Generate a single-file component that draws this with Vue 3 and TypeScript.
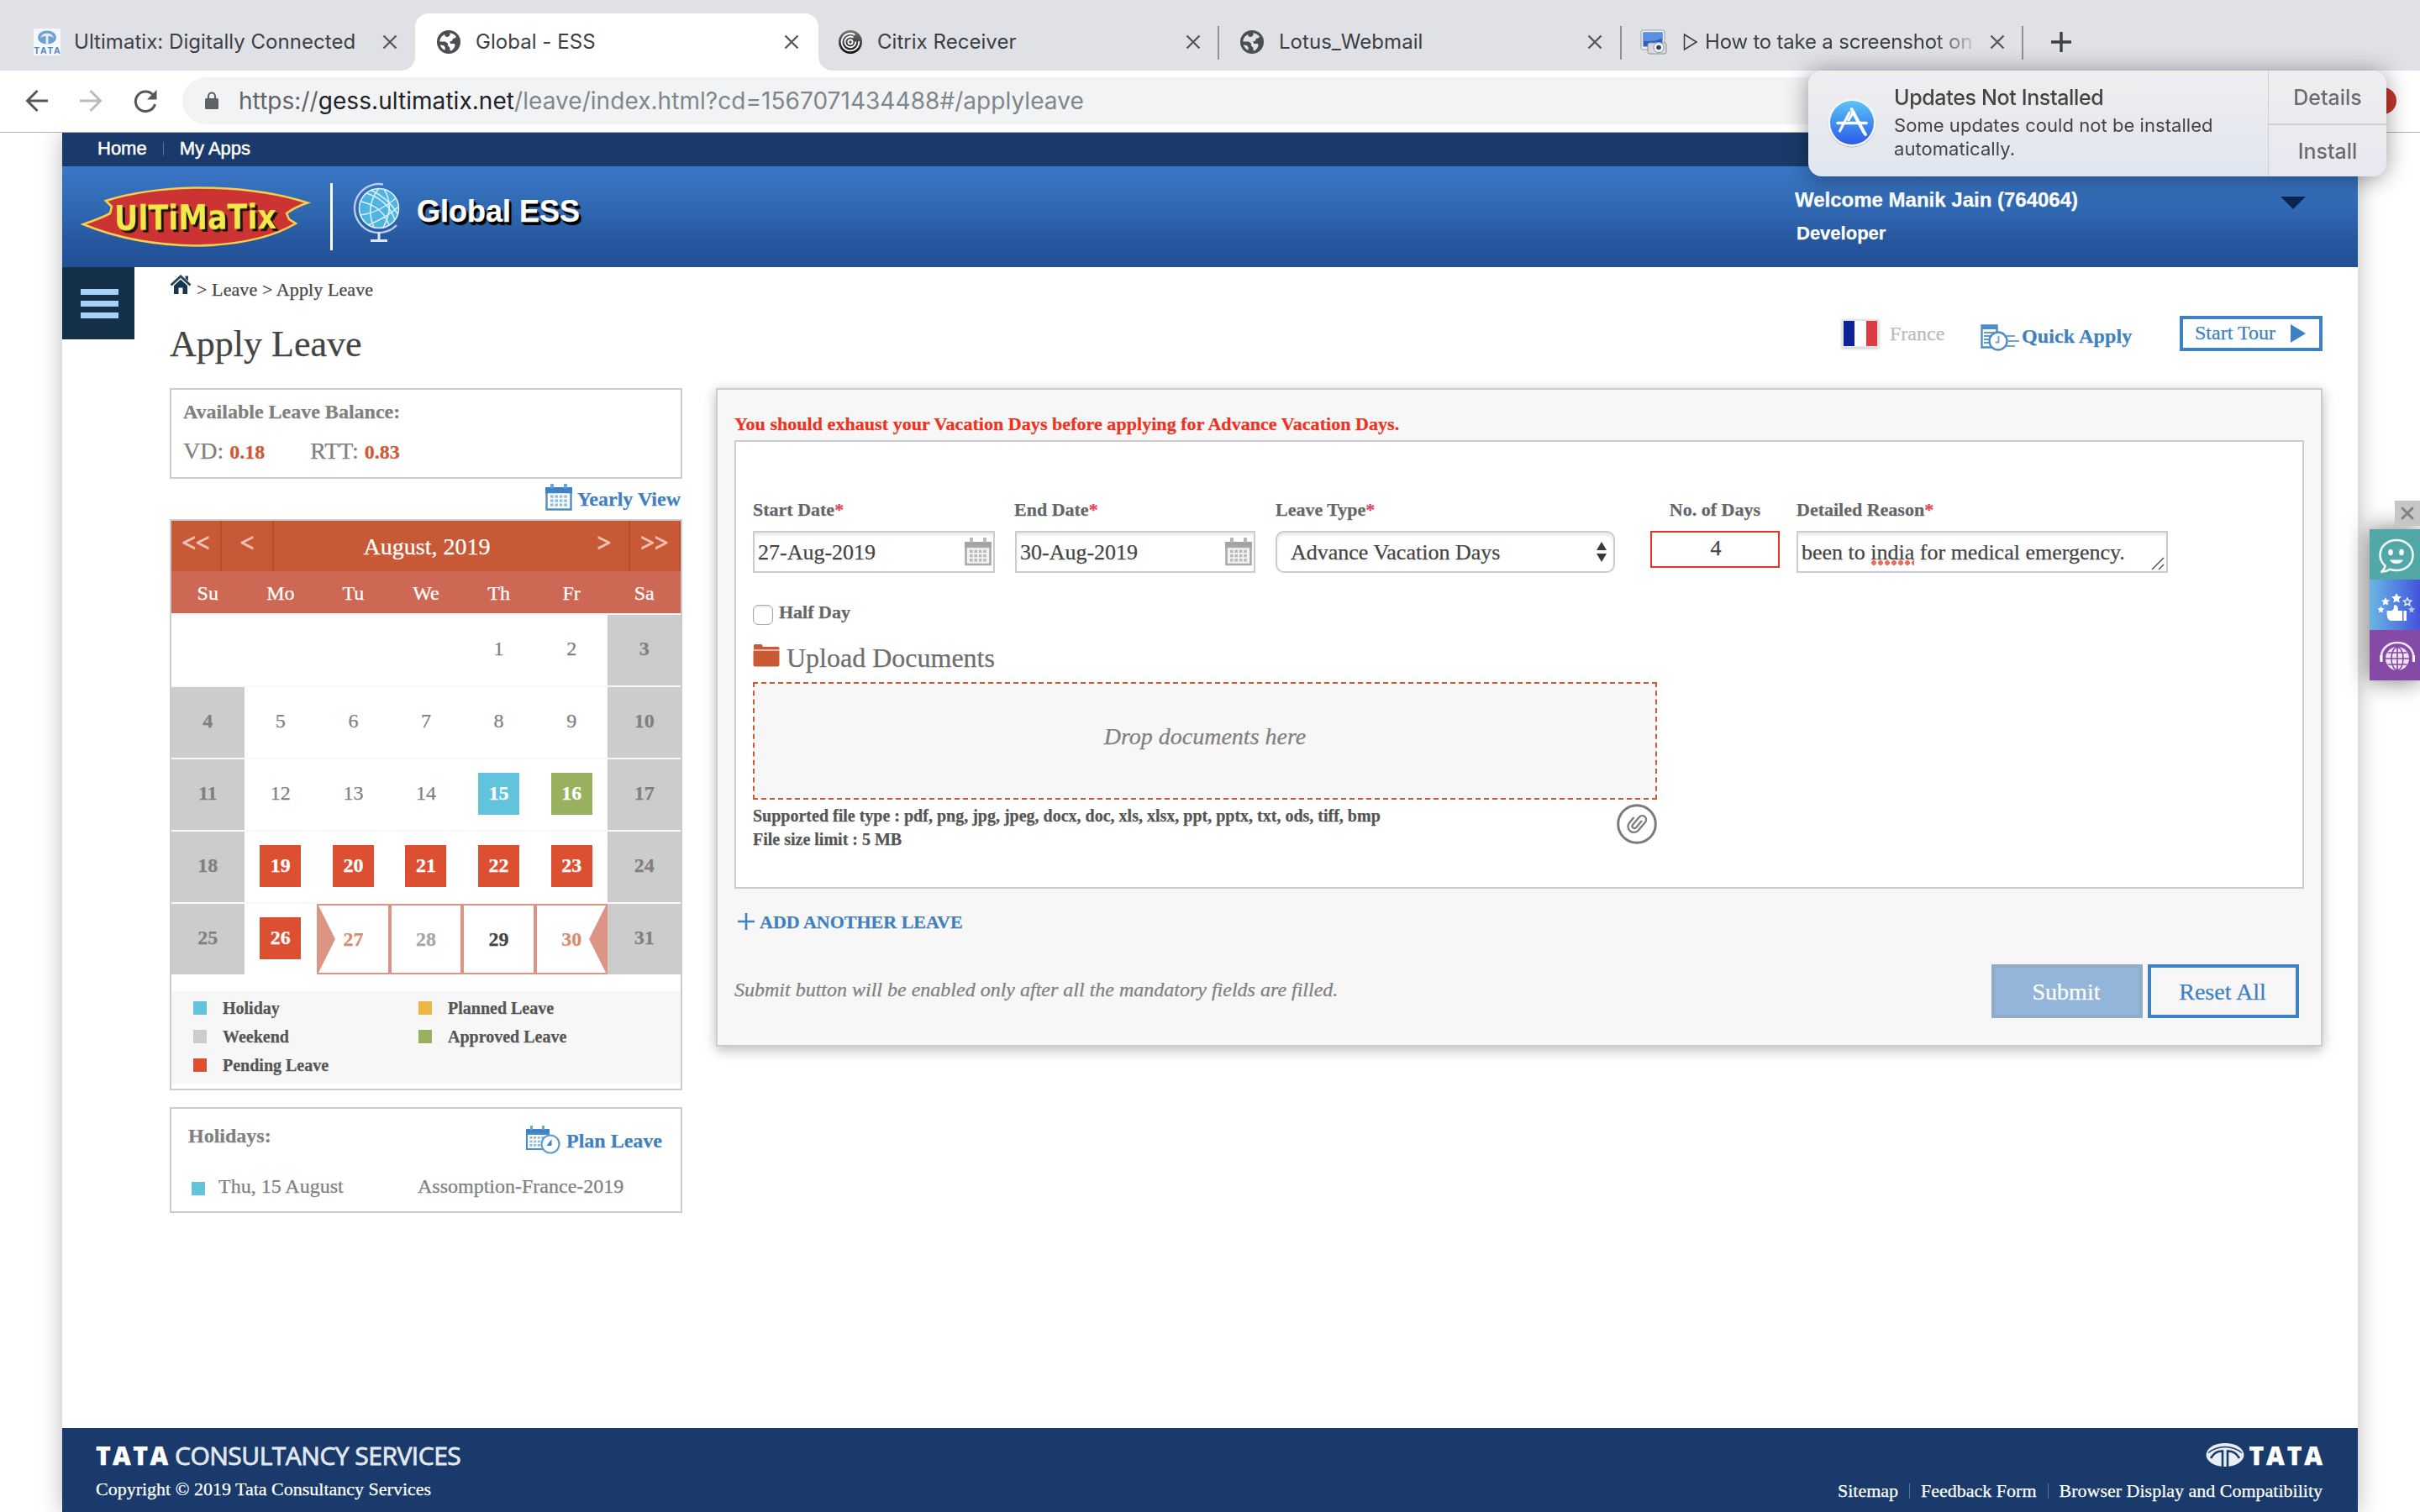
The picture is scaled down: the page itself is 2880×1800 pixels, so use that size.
<script setup lang="ts">
interface Day {
  n: number | null
  kind?: 'weekend' | 'holiday' | 'approved' | 'pending' | 'start' | 'mid' | 'today' | 'end'
}
interface Tab {
  title: string
  icon: 'tata' | 'globe' | 'citrix' | 'shot'
  cls: string
}

const tabs: Tab[] = [
  { title: 'Ultimatix: Digitally Connected', icon: 'tata', cls: 't1' },
  { title: 'Global - ESS', icon: 'globe', cls: 't2 active' },
  { title: 'Citrix Receiver', icon: 'citrix', cls: 't3 sep' },
  { title: 'Lotus_Webmail', icon: 'globe', cls: 't4 sep' },
  { title: 'How to take a screenshot on', icon: 'shot', cls: 't5 sep' },
]

const weekdays: string[] = ['Su', 'Mo', 'Tu', 'We', 'Th', 'Fr', 'Sa']

const special: Record<number, Day['kind']> = {
  15: 'holiday', 16: 'approved',
  19: 'pending', 20: 'pending', 21: 'pending', 22: 'pending', 23: 'pending', 26: 'pending',
  27: 'start', 28: 'mid', 29: 'today', 30: 'end',
}

const days: Day[] = Array.from({ length: 35 }, (_, i): Day => {
  const n = i - 3
  if (n < 1) return { n: null }
  const weekend = i % 7 === 0 || i % 7 === 6
  return { n, kind: weekend ? 'weekend' : special[n] }
})

const legend = [
  { label: 'Holiday', cls: 'c-holiday' },
  { label: 'Planned Leave', cls: 'c-planned' },
  { label: 'Weekend', cls: 'c-weekend' },
  { label: 'Approved Leave', cls: 'c-approved' },
  { label: 'Pending Leave', cls: 'c-pending' },
]

const gridDots: number[] = [0, 1, 2, 3]
</script>

<template>
  <div class="screen">
    <!-- Browser tabs -->
    <div class="tabstrip">
      <div v-for="t in tabs" :key="t.title" class="tab" :class="t.cls">
        <svg v-if="t.icon === 'tata'" class="fav32" viewBox="0 0 32 32">
          <rect width="32" height="32" fill="#f4f7fb" />
          <ellipse cx="16" cy="10.500" rx="11" ry="8" fill="#6f9ed0" />
          <path d="M14.500 19V9q-4-.5-6.500 2.500Q9.500 5.500 16 5.500T24 11.500Q21.500 8.500 17.500 9v10z" fill="#e3edf7" />
          <text x="0.500" y="30" font-size="10.500" font-weight="bold" textLength="31" fill="#4f86c0" font-family="Liberation Sans, sans-serif">TATA</text>
        </svg>
        <svg v-else-if="t.icon === 'globe'" class="fav28" viewBox="0 0 28 28">
          <circle cx="14" cy="14" r="14" fill="#4b4e52" />
          <path d="M15.500 3.200c3 .3 5.800 2 7.500 4.400l-1.500 1.900-2.500.3-.8 2.600-3 1.200 1 2.500h4.500l1 2-1.500 3.500-3 2.800-1.500-.4-.5-3.500-2.200-2v-2.700l-3-2.300H3.300C3.500 9.500 6 6.500 9 5l1 2.500 3 .5 2.500-2z" :fill="t.cls.includes('active') ? '#fff' : '#dfe1e6'" />
          <path d="M3.800 17.500l4 .6 2 2.400-.4 3.300C6.700 22.500 4.700 20.400 3.800 17.500z" :fill="t.cls.includes('active') ? '#fff' : '#dfe1e6'" />
        </svg>
        <svg v-else-if="t.icon === 'citrix'" class="fav28" viewBox="0 0 28 28">
          <defs>
            <linearGradient id="ctx" x1="0" y1="0" x2="0" y2="1">
              <stop offset="0" stop-color="#777" /><stop offset="1" stop-color="#111" />
            </linearGradient>
          </defs>
          <circle cx="14" cy="14" r="14" fill="url(#ctx)" />
          <g fill="none" stroke="#fff" stroke-width="1.800">
            <circle cx="14" cy="14" r="2.600" />
            <path d="M17.500 8.600A6.400 6.400 0 1 0 20.300 13.500" />
            <path d="M19.500 5.400A10.300 10.300 0 1 0 24.200 13" />
          </g>
        </svg>
        <svg v-else class="fav32" viewBox="0 0 32 32">
          <rect x="1" y="2" width="28" height="23" rx="2" fill="#eef0f3" stroke="#9a9da3" stroke-width="1" />
          <rect x="3.500" y="4.500" width="23" height="17" fill="#2f5fc0" />
          <path d="M3.500 4.500h23v7q-11 5-23 3z" fill="#5b8fe0" />
          <rect x="9" y="17" width="22" height="13" rx="2" fill="#d7d9dc" stroke="#8d9096" stroke-width="1" />
          <circle cx="22" cy="22.500" r="6" fill="#f6f6f6" stroke="#94979c" />
          <circle cx="22" cy="22.500" r="2.800" fill="#24446f" />
        </svg>
        <svg v-if="t.icon === 'shot'" class="playmark" viewBox="0 0 18 22"><path d="M1.500 2v18L16 11z" fill="none" stroke="#3c4043" stroke-width="1.600" /></svg>
        <span class="tabtitle">{{ t.title }}</span>
        <svg class="tabclose" viewBox="0 0 18 18"><path d="M1.500 1.500l15 15M16.500 1.500l-15 15" stroke="#55585d" stroke-width="2.400" /></svg>
      </div>
      <svg class="newtab" viewBox="0 0 26 26"><path d="M13 1v24M1 13h24" stroke="#3c4043" stroke-width="3.400" /></svg>
    </div>

    <!-- Address bar -->
    <div class="toolbar">
      <svg class="nav" viewBox="0 0 28 28"><path d="M27 14H3M14.500 2L2.500 14l12 12" fill="none" stroke="#54575c" stroke-width="3" /></svg>
      <svg class="nav fwd" viewBox="0 0 28 28"><path d="M1 14h24M13.500 2l12 12-12 12" fill="none" stroke="#b9bbbe" stroke-width="3" /></svg>
      <svg class="nav rel" viewBox="0 0 30 28"><path d="M25 8.200A11.800 11.800 0 1 0 26.500 18" fill="none" stroke="#54575c" stroke-width="3" /><path d="M28.500 1v11.500H17z" fill="#54575c" /></svg>
      <div class="omnibox">
        <svg class="lock" viewBox="0 0 18 24"><rect x="1" y="9" width="16" height="13" rx="1.500" fill="#5f6368" /><path d="M5 10V6.500a4 4 0 0 1 8 0V10" fill="none" stroke="#5f6368" stroke-width="2.200" /></svg>
        <div class="url"><span class="u1">https://</span><span class="u2">gess.ultimatix.net</span><span class="u3">/leave/index.html?cd=1567071434488#/applyleave</span></div>
      </div>
    </div>

    <!-- Web page -->
    <div class="viewport">
      <div class="page">
        <div class="topnav"><span>Home</span><i></i><span>My Apps</span></div>

        <header class="banner">
          <svg class="ulogo" viewBox="96 220 274 76">
            <path d="M99 267Q122 259 131 254L133 246L126 239Q170 225 232 223.500Q310 223 366 241.500Q352 246 341 254L344 261L352 266Q310 291 235 292.500Q160 292 99 267Z" fill="#cb3433" stroke="#f2cf4e" stroke-width="2.600" />
            <text class="ulogotext" x="136" y="273" font-size="40" textLength="193" lengthAdjust="spacingAndGlyphs" transform="rotate(-.6 232 260)">UlTiMaTix</text>
          </svg>
          <i class="bar"></i>
          <svg class="globe" viewBox="418 216 60 76">
            <circle cx="451" cy="248" r="24" fill="#4fb4e2" />
            <g fill="none" stroke="#d9effa" stroke-width="1.600">
              <circle cx="451" cy="248" r="23.500" />
              <path d="M436 230Q462 238 470 262M430 240Q456 246 463 268M428 256Q450 254 471 236M438 268Q462 258 474 246M451 224Q434 246 445 271M457 225Q470 246 456 271M441 226Q462 236 473 254" />
            </g>
            <path d="M456 219.500A29 29 0 1 0 472 268" fill="none" stroke="#b9cde8" stroke-width="2.400" />
            <path d="M451 276v10M441 286.500h20" stroke="#dfe8f4" stroke-width="3" />
          </svg>
          <h2>Global ESS</h2>
          <div class="who"><b>Welcome Manik Jain (764064)</b><b class="role">Developer</b></div>
          <i class="caret"></i>
        </header>

        <div class="content">
          <div class="burger"><i></i><i></i><i></i></div>

          <aside class="left">
            <div class="crumbs">
              <svg viewBox="0 0 26 24"><path d="M1.500 12.500L13 2l11.500 10.500" fill="none" stroke="#2b4560" stroke-width="3" /><path d="M18.500 1.500h3.500v6l-3.500-3z" fill="#2b4560" /><path d="M5 13l8-7.200L21 13v10h-5.500v-7.500h-5V23H5z" fill="#16334f" /></svg>
              <span>&gt; Leave &gt; Apply Leave</span>
            </div>
            <h1>Apply Leave</h1>

            <section class="balance">
              <b>Available Leave Balance:</b>
              <p><span>VD: <em>0.18</em></span><span>RTT: <em>0.83</em></span></p>
            </section>

            <div class="yearly">
              <svg viewBox="0 0 32 32">
                <path d="M0 4h32v8H0z" fill="#3d83c4" /><path d="M1.500 10h29v20.500h-29z" fill="#fff" stroke="#4c8cc9" stroke-width="2.400" />
                <path d="M1 10h30" stroke="#3d83c4" stroke-width="2" />
                <path d="M6 0h4v5H6zM22 0h4v5h-4z" fill="#6fa5d6" />
                <g fill="#8fb9e0"><template v-for="r in 3" :key="r"><rect v-for="c in gridDots" :key="c" :x="6 + c * 5.4" :y="8.500 + r * 5" width="3.600" height="3.200" /></template></g>
              </svg>
              <a>Yearly View</a>
            </div>

            <section class="calendar">
              <div class="calhead">
                <span class="nv">&lt;&lt;</span><span class="nv">&lt;</span><span class="month">August, 2019</span><span class="nv">&gt;</span><span class="nv">&gt;&gt;</span>
              </div>
              <div class="week"><span v-for="w in weekdays" :key="w">{{ w }}</span></div>
              <div class="days">
                <div v-for="(d, i) in days" :key="i" class="day" :class="d.kind"><span v-if="d.n">{{ d.n }}</span></div>
              </div>
              <div class="legend">
                <div v-for="l in legend" :key="l.label"><i :class="l.cls"></i>{{ l.label }}</div>
              </div>
            </section>

            <section class="holidays">
              <div class="hrow">
                <b>Holidays:</b>
                <a>
                  <svg viewBox="0 0 42 34">
                    <path d="M1 4h28v7H1z" fill="#3d83c4" /><path d="M6 0h3v5H6zM20 0h3v5h-3z" fill="#6fa5d6" />
                    <path d="M2 10h26v18H2z" fill="#fff" stroke="#4c8cc9" stroke-width="2.200" />
                    <g fill="#8fb9e0"><template v-for="r in 3" :key="r"><rect v-for="c in gridDots" :key="c" :x="5.5 + c * 4.600" :y="8.500 + r * 4.500" width="3" height="2.800" /></template></g>
                    <circle cx="30" cy="22" r="10.500" fill="#fff" stroke="#5e9bd1" stroke-width="2.200" />
                    <path d="M31.500 16v8h-6z" fill="#3d83c4" />
                  </svg>
                  Plan Leave
                </a>
              </div>
              <div class="hitem"><i class="c-holiday"></i><span class="hd">Thu, 15 August</span><span>Assomption-France-2019</span></div>
            </section>
          </aside>

          <main class="main">
            <div class="actions">
              <span class="flag"><i></i><i></i><i></i></span>
              <span class="country">France</span>
              <svg class="qa" viewBox="0 0 46 32">
                <path d="M1.500 1.500h18v26h-18z" fill="#fff" stroke="#4c8cc9" stroke-width="2.400" /><path d="M1 1h19v5H1z" fill="#4c8cc9" />
                <path d="M4 10h12M4 14h9M4 18h8M4 22h7" stroke="#5e9bd1" stroke-width="2" />
                <circle cx="21" cy="20" r="10.500" fill="#fff" stroke="#4c8cc9" stroke-width="2.400" /><path d="M21.500 14v7.500h-4" fill="none" stroke="#6fa5d6" stroke-width="2" />
                <path d="M31 14h10M33 20h13M31 26h10" stroke="#6fa5d6" stroke-width="2" />
              </svg>
              <a class="quick">Quick Apply</a>
              <button class="tour">Start Tour<i></i></button>
            </div>

            <section class="form">
              <p class="error">You should exhaust your Vacation Days before applying for Advance Vacation Days.</p>
              <div class="inner">
                <div class="fields">
                  <div class="f f1"><label>Start Date<sup>*</sup></label><div class="inp"><span>27-Aug-2019</span>
                    <svg class="cal" viewBox="0 0 32 34"><path d="M0 5h32v8H0z" fill="#a3a3a3" /><path d="M1.500 11h29v21h-29z" fill="#f3f3f3" stroke="#aaa" stroke-width="2.600" /><path d="M6 0h4v6H6zM22 0h4v6h-4z" fill="#b8b8b8" /><g fill="#b9b9b9"><template v-for="r in 3" :key="r"><rect v-for="c in gridDots" :key="c" :x="6 + c * 5.4" :y="9.500 + r * 5.200" width="3.600" height="3.400" /></template></g></svg>
                  </div></div>
                  <div class="f f2"><label>End Date<sup>*</sup></label><div class="inp"><span>30-Aug-2019</span>
                    <svg class="cal" viewBox="0 0 32 34"><path d="M0 5h32v8H0z" fill="#a3a3a3" /><path d="M1.500 11h29v21h-29z" fill="#f3f3f3" stroke="#aaa" stroke-width="2.600" /><path d="M6 0h4v6H6zM22 0h4v6h-4z" fill="#b8b8b8" /><g fill="#b9b9b9"><template v-for="r in 3" :key="r"><rect v-for="c in gridDots" :key="c" :x="6 + c * 5.4" :y="9.500 + r * 5.200" width="3.600" height="3.400" /></template></g></svg>
                  </div></div>
                  <div class="f f3"><label>Leave Type<sup>*</sup></label><div class="inp sel"><span>Advance Vacation Days</span>
                    <svg class="updown" viewBox="0 0 14 24"><path d="M1 10L7 0l6 10zM1 14l6 10 6-10z" fill="#3a3a3a" /></svg>
                  </div></div>
                  <div class="f f4"><label>No. of Days</label><div class="inp num">4</div></div>
                  <div class="f f5"><label>Detailed Reason<sup>*</sup></label><div class="inp area"><span>been to <u>india</u> for medical emergency.</span>
                    <svg class="grip" viewBox="0 0 16 16"><path d="M1 15L15 1M9 15l6-6" stroke="#555" stroke-width="1.500" /></svg>
                  </div></div>
                </div>

                <div class="half"><i></i><b>Half Day</b></div>
                <div class="upl">
                  <svg viewBox="0 0 32 28"><path d="M1 5V2.500Q1 1 2.500 1h8L12 4h18q1.500 0 1.500 1.500V7H1z" fill="#c75b39" /><path d="M.5 9h31v16.500q0 2-2 2h-27q-2 0-2-2z" fill="#c95a36" /><path d="M.5 7h31v2H.5z" fill="#e9b6a5" /></svg>
                  <span>Upload Documents</span>
                </div>
                <div class="drop">Drop documents here</div>
                <div class="hint">
                  <p>Supported file type : pdf, png, jpg, jpeg, docx, doc, xls, xlsx, ppt, pptx, txt, ods, tiff, bmp<br>File size limit : 5 MB</p>
                  <svg class="clip" viewBox="0 0 48 48"><circle cx="24" cy="24" r="22.300" fill="#fff" stroke="#7b7b7b" stroke-width="3" /><path d="M29.500 21l-7 8.200a2.600 2.600 0 0 1-4-3.300l8-9.400a4.700 4.700 0 0 1 7.200 6l-8.600 10.200a7 7 0 0 1-10.700-9l5.600-6.600" fill="none" stroke="#7b7b7b" stroke-width="2.300" transform="translate(.5 -1)" /></svg>
                </div>
              </div>
              <div class="add"><svg viewBox="0 0 20 20"><path d="M10 0v20M0 10h20" stroke="#3f82c3" stroke-width="2.600" /></svg><a>ADD ANOTHER LEAVE</a></div>
              <div class="submitrow">
                <em>Submit button will be enabled only after all the mandatory fields are filled.</em>
                <button class="btn submit">Submit</button>
                <button class="btn reset">Reset All</button>
              </div>
            </section>
          </main>
        </div>

        <footer class="foot">
          <div>
            <div class="tcs"><b>TATA</b><span>CONSULTANCY SERVICES</span></div>
            <p>Copyright © 2019 Tata Consultancy Services</p>
          </div>
          <div class="fr">
            <div class="tata">
              <svg viewBox="0 0 46 30"><ellipse cx="23" cy="15" rx="22.500" ry="14" fill="#e9eef5" /><path d="M20 30V10.500Q11 10 6 19M26 30V10.500Q35 10 40 19" fill="none" stroke="#193a6a" stroke-width="2.600" /><path d="M3 12.500Q12 5.500 23 5.500T43 12.500" fill="none" stroke="#193a6a" stroke-width="1.500" /></svg>
              <b>TATA</b>
            </div>
            <div class="links"><a>Sitemap</a><i></i><a>Feedback Form</a><i></i><a>Browser Display and Compatibility</a></div>
          </div>
        </footer>
      </div>
    </div>

    <!-- Floating feedback widget -->
    <div class="widget">
      <svg class="wx" viewBox="0 0 30 30"><rect width="30" height="30" fill="#c6c6c6" /><path d="M9 9l12 12M21 9L9 21" stroke="#828282" stroke-width="3" stroke-linecap="round" /></svg>
      <div class="tiles">
        <svg viewBox="0 0 60 60"><rect width="60" height="60" fill="#52a8a7" />
          <path d="M18.500 43.500C14 39.500 12.500 35 12.500 31 12.500 20.500 21 13 32 13s19.500 7.500 19.500 18S43 49 32 49c-3.500 0-6-.5-8-1.200-3 2-6.500 3-10.500 3.200 2.500-1.500 4.500-4 5-7.500z" fill="none" stroke="#edf8f7" stroke-width="2.600" />
          <ellipse cx="25" cy="27.500" rx="2.800" ry="3.800" fill="#fff" /><ellipse cx="38" cy="27.500" rx="2.800" ry="3.800" fill="#fff" /><path d="M24 36.500h16q-2.500 4.500-8 4.500t-8-4.500z" fill="#fff" /></svg>
        <svg viewBox="0 0 60 60">
          <defs><linearGradient id="wg" x1="0" x2="1"><stop offset="0" stop-color="#6ab6e4" /><stop offset="1" stop-color="#4354dc" /></linearGradient></defs>
          <rect width="60" height="60" fill="url(#wg)" />
          <g fill="#fff">
            <path d="M20.500 37h5.500l2.500-1.500.5-5q3-1 4.500 2l.5 4.500h5v12H25q-5-1-4.500-12zM40.500 37h3.500v12h-3.500z" />
            <path d="M32 16l1.800 3.800 4.200.5-3.100 2.900.8 4.200-3.700-2-3.700 2 .8-4.200-3.100-2.900 4.200-.5z" />
            <path d="M19 21l1.500 3.200 3.600.4-2.700 2.500.7 3.500-3.100-1.700-3.100 1.700.7-3.500-2.700-2.500 3.600-.4zM13.500 31.500l1.200 2.600 3 .3-2.300 2 .6 3-2.500-1.500-2.500 1.500.6-3-2.300-2 3-.3z" />
          </g>
          <path d="M45 22l1.400 2.800 3.100.4-2.300 2.200.6 3.100-2.800-1.500-2.800 1.500.6-3.100-2.300-2.200 3.100-.4z" fill="none" stroke="#e8f0ff" stroke-width="1.500" />
          <path d="M50 31.500l1.200 2.600 3 .3-2.300 2 .6 3-2.500-1.500-2.500 1.500.6-3-2.300-2 3-.3z" fill="#b9c6f8" />
        </svg>
        <svg viewBox="0 0 60 60"><rect width="60" height="60" fill="#8549a6" />
          <circle cx="33" cy="34" r="14" fill="#efe2f5" />
          <path d="M33 20v28M19 34h28M21.500 27h23M21.500 41h23" stroke="#8549a6" stroke-width="1.600" /><ellipse cx="33" cy="34" rx="7" ry="13.500" fill="none" stroke="#8549a6" stroke-width="1.600" />
          <path d="M14 36C12 24 21 15 33 15s21 9 19 21" fill="none" stroke="#efe2f5" stroke-width="2.600" /><path d="M12.500 30h3v8h-3zM51 30h3v8h-3z" fill="#fff" /></svg>
      </div>
    </div>

    <!-- macOS notification -->
    <span class="redbadge"></span>
    <div class="notice">
      <svg class="appstore" viewBox="0 0 60 60">
        <defs><linearGradient id="as" x1="0" y1="0" x2="0" y2="1"><stop offset="0" stop-color="#5cc3f6" /><stop offset="1" stop-color="#2a5be9" /></linearGradient></defs>
        <circle cx="30" cy="31" r="28.500" fill="#b9bcc4" /><circle cx="30" cy="30" r="28.500" fill="#f4f6f9" /><circle cx="30" cy="30" r="26" fill="url(#as)" />
        <g stroke="#fff" stroke-linecap="round" fill="none"><path d="M27 18L15.500 40" stroke-width="3" /><path d="M29.500 14l14 26" stroke-width="4" /><path d="M13 30.500h34" stroke-width="3.600" /><path d="M32 17l-6 10" stroke-width="3" /><path d="M44 41l2 3" stroke-width="4" /></g>
      </svg>
      <div class="ntext"><b>Updates Not Installed</b><p>Some updates could not be installed<br>automatically.</p></div>
      <div class="nbtns"><span>Details</span><span>Install</span></div>
    </div>
  </div>
</template>

<style>
html, body { margin: 0; background: #fff; }
</style>

<style scoped>
* { box-sizing: border-box; }
p, h1, h2 { margin: 0; }
h1, h2 { font-weight: normal; }
.screen { position: relative; width: 2880px; height: 1800px; overflow: hidden; background: #fff; font-family: "Liberation Serif", "Times New Roman", serif; color: #444; }
svg { display: block; flex: none; }

/* tabs */
.tabstrip { display: flex; height: 84px; padding-top: 16px; background: #dfe1e6; font: 24px/28px Inter, Roboto, sans-serif; color: #3c4043; }
.tab { position: relative; display: flex; align-items: center; height: 68px; flex: none; white-space: nowrap; }
.t1 { width: 494px; padding: 0 21px 0 40px; }
.t2 { width: 480px; padding: 0 23px 0 26px; }
.t3 { width: 477px; padding: 0 22px 0 24px; }
.t4 { width: 479px; padding: 0 23px 0 25px; }
.t5 { width: 478px; padding: 0 22px 0 22px; }
.active { background: #fff; border-radius: 16px 16px 0 0; }
.active::before, .active::after { content: ""; position: absolute; bottom: 0; width: 16px; height: 16px; }
.active::before { left: -16px; background: radial-gradient(circle at 0 0, #dfe1e6 15.500px, #fff 16px); }
.active::after { right: -16px; background: radial-gradient(circle at 100% 0, #dfe1e6 15.500px, #fff 16px); }
.sep::after { content: ""; position: absolute; right: 0; top: 15px; width: 2px; height: 40px; background: #8e9196; }
.fav32 { width: 32px; height: 32px; margin-right: 16px; }
.fav28 { width: 28px; height: 28px; margin-right: 18px; }
.t5 .fav32 { margin-right: 19px; }
.playmark { width: 18px; height: 22px; margin-right: 8px; }
.tabtitle { flex: 1; overflow: hidden; letter-spacing: 0.04px; }
.t5 .tabtitle { margin-right: 14px; letter-spacing: -0.2px; -webkit-mask-image: linear-gradient(90deg, #000 84%, transparent 101%); mask-image: linear-gradient(90deg, #000 84%, transparent 101%); }
.tabclose { width: 18px; height: 18px; }
.newtab { width: 26px; height: 26px; margin: 21px 0 0 32px; }

/* toolbar */
.toolbar { display: flex; align-items: center; height: 74px; padding: 0 0 2px 30px; border-bottom: 1px solid #b3b3b3; background: #fff; }
.nav { width: 28px; height: 28px; }
.fwd { margin-left: 36px; }
.rel { width: 30px; margin-left: 36px; }
.omnibox { display: flex; align-items: center; flex: 1; height: 56px; margin: 0 60px 0 29px; padding-left: 26px; border-radius: 28px; background: #f1f3f4; }
.lock { width: 18px; height: 24px; }
.url { margin-left: 23px; font: 28px/40px Inter, Roboto, sans-serif; letter-spacing: .05px; white-space: nowrap; }
.u1 { color: #5f6368; } .u2 { color: #202124; } .u3 { color: #80868b; }

/* page */
.viewport { display: flex; justify-content: center; height: 1642px; overflow: hidden; }
.page { width: 2732px; height: 1642px; display: flex; flex-direction: column; background: #fff; box-shadow: 0 0 26px rgba(0, 0, 0, .28); -webkit-text-stroke-width: .25px; }
.topnav { display: flex; align-items: center; height: 40px; padding: 0 0 3px 42px; background: #193a6a; color: #fff; font: 22px/30px "Liberation Sans", Arial, sans-serif; -webkit-text-stroke: .5px #fff; }
.topnav i { width: 1px; height: 16px; margin: 0 19px; background: #56749c; }
.banner { display: flex; height: 120px; padding-left: 22px; background: linear-gradient(#3a77c6, #2f67b0 45%, #26569e 75%, #235095); }
.ulogo { width: 274px; height: 76px; margin-top: 22px; overflow: visible; }
.ulogotext { font-family: "DejaVu Sans", sans-serif; font-weight: bold; fill: #f4e94a; filter: drop-shadow(3px 3px 0 #1b1508); }
.bar { width: 3px; height: 80px; margin: 20px 22px 0 23px; background: #fff; }
.globe { width: 60px; height: 76px; margin-top: 18px; }
.banner h2 { margin: 34px 0 0 18px; font: bold 36px/40px "Liberation Sans", Arial, sans-serif; color: #fff; text-shadow: 1px 2px 0 #000, 2px 3px 0 #000, 3px 4px 1px #000; }
.who { display: flex; flex-direction: column; margin: 25px 0 0 auto; width: 578px; color: #fff; font: bold 24px/30px "Liberation Sans", Arial, sans-serif; }
.role { margin: 10px 0 0 2px; font-size: 22px; }
.caret { margin: 36px 62px 0 0; border: 15px solid transparent; border-top-color: #0b2550; border-bottom: 0; height: 0; }

.content { flex: 1; display: flex; min-height: 0; }
.burger { display: flex; flex-direction: column; gap: 7px; width: 86px; height: 86px; padding: 26px 20px 0 22px; background: #143049; }
.burger i { width: 45px; height: 7px; background: #a5d3f7; }

.left { width: 610px; margin-left: 42px; }
.crumbs { display: flex; height: 52px; font-size: 22px; line-height: 26px; letter-spacing: .1px; }
.crumbs svg { width: 26px; height: 24px; margin-top: 9px; }
.crumbs span { margin: 14px 0 0 6px; }
h1 { font-size: 44px; line-height: 50px; margin-top: 15px; height: 77px; white-space: nowrap; }
.balance { height: 108px; padding: 12px 14px; border: 2px solid #ccc; color: #808080; }
.balance b { display: block; font-size: 24px; line-height: 28px; }
.balance p { display: flex; margin-top: 17px; font-size: 28px; line-height: 32px; gap: 54px; }
.balance em { font: bold 24px "Liberation Serif", serif; color: #cb5a36; }
.yearly { display: flex; justify-content: flex-end; height: 48px; padding: 6px 2px 0 0; }
.yearly svg { width: 32px; height: 32px; margin-right: 6px; }
.yearly a { font-weight: bold; font-size: 24px; line-height: 36px; color: #3f80c1; }

.calendar { height: 680px; border: 2px solid #ccc; display: flex; flex-direction: column; }
.calhead { display: flex; height: 60px; background: #c85936; color: #fff; font-size: 28px; text-align: center; }
.nv { width: 60px; padding-top: 10px; line-height: 32px; border-right: 2px solid #b34d2f; color: #efc0b3; font-weight: bold; font-size: 29px; -webkit-text-stroke-width: 1px; }
.nv:nth-child(2) { width: 62px; }
.nv:nth-child(3) ~ .nv { border-right: 0; border-left: 2px solid #b34d2f; }
.month { flex: 1; line-height: 62px; }
.week { display: grid; grid-template-columns: repeat(7, 1fr); height: 50px; background: #cd6855; color: #fff; font-size: 24px; line-height: 52px; text-align: center; }
.days { display: grid; grid-template-columns: repeat(7, 1fr); grid-auto-rows: 86px; }
.day { position: relative; border-top: 2px solid #f7f7f7; padding-top: 16px; font-size: 24px; line-height: 48px; text-align: center; color: #808080; }
.day span { display: block; width: 49px; height: 50px; margin: 0 auto; }
.weekend { background: #ccc; font-weight: bold; }
.holiday, .approved, .pending { font-weight: bold; color: #fff; }
.holiday span, .c-holiday { background: #61c4dc; }
.approved span, .c-approved { background: #99b15e; }
.pending span, .c-pending { background: #dc4f31; }
.c-planned { background: #ebb746; }
.c-weekend { background: #ccc; }
.start, .mid, .today, .end { font-weight: bold; padding-top: 16px; margin-top: 2px; height: 84px; border: 2px solid #dc9585; }
.start, .end { color: #db8a6e; }
.mid { color: #a6a6a6; }
.today { color: #444; }
.start::before, .end::before { content: ""; position: absolute; top: 0; border: 40px solid transparent; }
.start::before { left: 0; border-left: 20px solid #dc9585; border-right: 0; }
.end::before { right: 0; border-right: 20px solid #dc9585; border-left: 0; }
.legend { display: grid; grid-template-columns: 268px 1fr; grid-auto-rows: 34px; align-content: start; height: 110px; margin-top: 20px; padding: 3px 26px; background: #f7f7f7; font-weight: bold; font-size: 20px; line-height: 32px; color: #555; }
.legend div { display: flex; align-items: center; }
.legend i { width: 16px; height: 16px; margin-right: 19px; }

.holidays { height: 126px; margin-top: 20px; padding: 18px 22px 0 20px; border: 2px solid #ccc; color: #808080; font-size: 24px; line-height: 28px; }
.hrow { display: flex; justify-content: space-between; height: 60px; }
.hrow a { display: flex; line-height: 40px; font-weight: bold; color: #3f80c1; }
.hrow svg { width: 42px; height: 34px; margin: 2px 7px 0 0; }
.hitem { display: flex; align-items: center; padding-left: 4px; }
.hitem i { width: 16px; height: 16px; margin: 6px 16px 0 0; }
.hd { width: 237px; }

.main { flex: 1; padding: 0 42px 0 40px; }
.actions { display: flex; justify-content: flex-end; height: 144px; padding-top: 58px; }
.flag { display: flex; width: 44px; height: 34px; margin-top: 4px; border: 2px solid #e4e4e4; box-shadow: 0 1px 3px rgba(0, 0, 0, .25); }
.flag i { flex: 1; background: #fff; }
.flag i:first-child { background: #0b2394; }
.flag i:last-child { background: #df3c41; }
.country { margin: 7px 0 0 13px; font-size: 24px; line-height: 28px; color: #bbb; width: 108px; }
.qa { width: 46px; height: 32px; margin-top: 10px; }
.quick { margin: 10px 0 0 3px; width: 188px; font-size: 24px; line-height: 28px; font-weight: bold; color: #3f80c1; letter-spacing: .12px; }
.tour { display: flex; justify-content: space-between; width: 170px; height: 42px; padding: 0 16px 0 14px; border: 4px solid #3f82c3; background: #fff; font: 24px/32px "Liberation Serif", serif; color: #3f80c1; white-space: nowrap; }
.tour i { align-self: center; border: 11px solid transparent; border-left: 18px solid #3f82c3; border-right: 0; }

.form { height: 784px; padding: 0 20px; border: 2px solid #ccc; background: #f7f7f7; box-shadow: 0 4px 14px rgba(0, 0, 0, .28); display: flex; flex-direction: column; }
.error { height: 60px; padding-top: 27px; font-weight: bold; font-size: 22px; line-height: 28px; letter-spacing: .05px; color: #ea3323; }
.inner { height: 534px; padding: 66px 20px 0; border: 2px solid #ccc; background: #fff; }
.fields { display: flex; }
.f label { display: block; height: 40px; padding-top: 1px; font-weight: bold; font-size: 22px; line-height: 28px; color: #666; white-space: nowrap; }
.f sup { color: #e5455f; vertical-align: baseline; font-size: 22px; line-height: 1; }
.inp { display: flex; align-items: center; height: 50px; padding: 0 2px 0 4px; border: 2px solid #ccc; background: #fff; box-shadow: inset 0 4px 5px -2px rgba(0, 0, 0, .12); font-size: 26px; line-height: 30px; color: #444; white-space: nowrap; }
.inp span { flex: 1; padding-top: 1px; }
.f1 { width: 288px; } .f2 { width: 286px; margin-left: 24px; } .f3 { width: 404px; margin-left: 24px; }
.f2 label { margin-left: -1px; }
.f4 { width: 154px; margin-left: 42px; } .f5 { width: 442px; margin-left: 20px; }
.f4 label { text-align: right; padding-right: 23px; }
.cal { width: 32px; height: 34px; }
.sel { border-radius: 10px; padding: 0 7px 0 16px; }
.updown { width: 14px; height: 24px; }
.num { height: 44px; padding-bottom: 2px; justify-content: center; border-color: #e83223; box-shadow: none; }
.area { position: relative; }
.area u { text-decoration: none; background: radial-gradient(circle, #ee6a5a 2.600px, transparent 3.200px) 0 100% / 8px 6px repeat-x; padding-bottom: 1px; }
.grip { position: absolute; right: 2px; bottom: 1px; width: 16px; height: 16px; }
.half { display: flex; height: 60px; margin-top: 38px; color: #666; font-size: 22px; line-height: 18px; }
.half i { width: 24px; height: 24px; margin-right: 7px; border: 1.500px solid #aaa; border-radius: 6px; box-shadow: inset 0 1px 3px rgba(0, 0, 0, .15); }
.upl { display: flex; height: 32px; margin-top: -14px; }
.upl svg { width: 32px; height: 28px; margin-right: 8px; }
.upl span { font-size: 32px; line-height: 34px; color: #6e6e6e; }
.drop { width: 1076px; height: 140px; margin-top: 14px; border: 2px dashed #cb5a36; background: #f7f7f7; text-align: center; font-style: italic; font-size: 28px; line-height: 126px; color: #808080; }
.hint { display: flex; justify-content: space-between; width: 1076px; padding-top: 5px; font-weight: bold; font-size: 20px; line-height: 28px; color: #555; white-space: nowrap; }
.clip { width: 48px; height: 48px; }
.add { display: flex; align-items: center; height: 28px; margin-top: 25px; padding-left: 4px; color: #3f80c1; font-weight: bold; font-size: 22px; }
.add svg { width: 20px; height: 20px; margin-right: 6px; }
.add a { padding-top: 2px; }
.submitrow { display: flex; margin-top: 37px; padding-right: 6px; }
.submitrow em { flex: 1; padding-top: 16px; font-size: 24px; line-height: 28px; color: #808080; }
.btn { width: 180px; height: 64px; margin-left: 6px; padding: 0 2px 0 0; border: 4px solid #3f82c3; background: #f7f7f7; font: 28px/53px "Liberation Serif", serif; color: #3f80c1; }
.submit { background: #93b5da; border-color: #91abc9; color: #fff; }

.foot { display: flex; justify-content: space-between; height: 100px; padding: 0 42px 0 40px; background: #193a6a; color: #fff; font-size: 22px; line-height: 26px; }
.tcs { display: flex; height: 40px; margin-top: 13px; font: 30px/40px "Open Sans", "Noto Sans", sans-serif; color: #e3e8ef; white-space: nowrap; }
.tcs b { width: 94px; font-weight: 800; color: #fff; letter-spacing: 2.400px; }
.tcs span { letter-spacing: -.5px; -webkit-text-stroke-width: .8px; }
.foot p { margin-top: 7px; }
.fr { display: flex; flex-direction: column; align-items: flex-end; }
.tata { display: flex; margin-top: 13px; height: 40px; font: 800 30px/40px "Open Sans", sans-serif; letter-spacing: 2.800px; }
.tata b { margin-right: -2.800px; font-weight: 800; }
.tata svg { width: 46px; height: 30px; margin: 4px 6px 0 0; }
.links { display: flex; align-items: center; margin-top: 9px; }
.links i { width: 1px; height: 18px; margin: 0 13px; background: #56749c; }

/* overlays */
.widget { position: absolute; right: 0; top: 596px; width: 60px; display: flex; flex-direction: column; align-items: flex-end; }
.wx { width: 30px; height: 30px; margin-bottom: 4px; position: relative; z-index: 1; }
.tiles { box-shadow: 0 0 28px rgba(0, 0, 0, .55); }
.tiles svg { width: 60px; height: 60px; }
.redbadge { position: absolute; left: 2820px; top: 104px; width: 32px; height: 32px; border-radius: 50%; background: #c5372c; }
.notice { position: absolute; left: 2152px; top: 84px; width: 688px; height: 126px; display: flex; border-radius: 16px; overflow: hidden; background: linear-gradient(#eeefef, #e7e9ee 50%, #dfe6f1); filter: drop-shadow(0 2px 14px rgba(0, 0, 0, .4)); font-family: Inter, Roboto, sans-serif; color: #444; }
.appstore { width: 60px; height: 60px; margin: 32px 20px 0 22px; }
.ntext { flex: 1; padding-top: 15px; }
.ntext b { display: block; font-weight: 500; font-size: 25px; line-height: 34px; letter-spacing: -.35px; white-space: nowrap; }
.ntext p { margin-top: 2px; font-size: 22px; line-height: 28px; white-space: nowrap; letter-spacing: .05px; }
.nbtns { width: 141px; display: flex; flex-direction: column; border-left: 1px solid #cfd1d5; background: rgba(240, 236, 240, .5); font-weight: 500; font-size: 25px; color: #6b6c70; text-align: center; }
.nbtns span { height: 63px; line-height: 64px; }
.nbtns span + span { border-top: 2px solid #cfd1d5; line-height: 63px; }
</style>
